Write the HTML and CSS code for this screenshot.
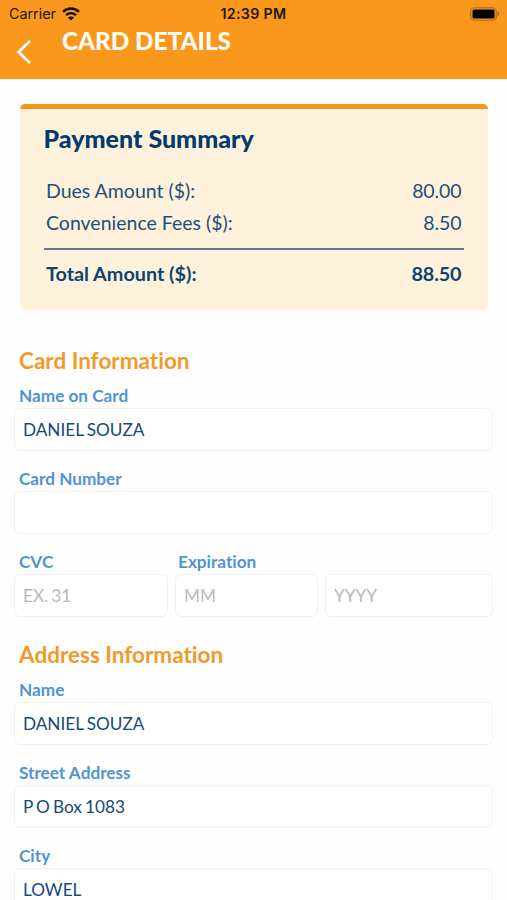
FILE: index.html
```
<!DOCTYPE html>
<html lang="en">
<head>
<meta charset="utf-8">
<title>Card Details</title>
<link rel="stylesheet" href="styles.css">
</head>
<body>
<header class="header">
  <div class="status">
    <div class="carrier">
      <span>Carrier</span>
      <svg class="wifi" width="18" height="14" viewBox="0 0 18 14">
        <path d="M1 4.8C5.6.5 12.4.5 17 4.8" fill="none" stroke="#111" stroke-width="2.5"/>
        <path d="M4 8.2c3-2.7 7-2.7 10 0" fill="none" stroke="#111" stroke-width="2.3"/>
        <path d="M9 13.4 5.9 10.5c1.8-1.5 4.4-1.5 6.2 0z" fill="#111"/>
      </svg>
    </div>
    <span class="time">12:39 PM</span>
    <svg class="battery" width="30" height="14" viewBox="0 0 30 14">
      <rect x=".7" y=".7" width="25.6" height="12.6" rx="3.8" fill="none" stroke="#a76a1b" stroke-width="1.1"/>
      <rect x="2.5" y="2.5" width="22" height="9" rx="1.5" fill="#000"/>
      <path d="M27.6 4.8c2 .6 2 3.8 0 4.4z" fill="#a76a1b"/>
    </svg>
  </div>
  <div class="navbar">
    <svg class="back" width="16" height="26" viewBox="0 0 16 26">
      <path d="M15 2 3.500 13 15 24" fill="none" stroke="#fff" stroke-width="2.6"/>
    </svg>
    <h1 class="title">CARD DETAILS</h1>
  </div>
</header>
<main>
  <section class="summary">
    <h2 class="summary-title">Payment Summary</h2>
    <div class="row"><span>Dues Amount ($):</span><span class="amount">80.00</span></div>
    <div class="row"><span>Convenience Fees ($):</span><span class="amount">8.50</span></div>
    <div class="row total"><span>Total Amount ($):</span><span class="amount">88.50</span></div>
  </section>
  <section class="form">
    <h3 class="section-title">Card Information</h3>
    <div class="field"><label class="label" for="card-name">Name on Card</label><input class="input" id="card-name" value="DANIEL SOUZA"></div>
    <div class="field"><label class="label" for="card-number">Card Number</label><input class="input" id="card-number"></div>
    <div class="field-row">
      <div class="field"><label class="label" for="cvc">CVC</label><input class="input" id="cvc" placeholder="EX. 31"></div>
      <div class="field"><label class="label label-expiration" for="month">Expiration</label><input class="input" id="month" placeholder="MM"></div>
      <div class="field field-year"><input class="input" id="year" placeholder="YYYY"></div>
    </div>
    <h3 class="section-title">Address Information</h3>
    <div class="field"><label class="label" for="name">Name</label><input class="input" id="name" value="DANIEL SOUZA"></div>
    <div class="field"><label class="label" for="street">Street Address</label><input class="input" id="street" value="P O Box 1083"></div>
    <div class="field"><label class="label" for="city">City</label><input class="input" id="city" value="LOWEL"></div>
  </section>
</main>
</body>
</html>
```
FILE: styles.css
```
* { box-sizing: border-box; }
html, body { height: 900px; overflow: hidden; }
body { margin: 0; background: #fefefe; font-family: Lato, sans-serif; font-variant-ligatures: none; color: #1d4f7c; }
h1, h2, h3 { margin: 0; }

.header { height: 79px; background: #f9981c; }
.status {
  display: grid;
  grid-template-columns: 1fr auto 1fr;
  align-items: center;
  height: 27px;
  padding: 0 7px 0 9px;
  font: 14.3px/27px Inter, sans-serif;
  color: #21170a;
}
.carrier { display: flex; align-items: center; gap: 6px; }
.time { margin-right: 2px; font-weight: 600; font-size: 14.2px; letter-spacing: .35px; }
.battery { justify-self: end; }
.navbar { display: flex; padding-left: 15px; }
.back { margin-top: 12px; }
.title { margin-left: 31px; font-size: 24.3px; line-height: 27px; font-weight: 900; color: #fffdf5; }

.summary {
  height: 206px;
  margin: 25px 19px 0 19.5px;
  padding: 13px 24px 0;
  border-top: 5px solid #f5961c;
  border-radius: 5px;
  background: #fff2dc;
}
.summary-title { font-size: 25px; line-height: 32px; font-weight: 900; color: #043b6f; margin-bottom: 21px; }
.row { display: flex; justify-content: space-between; padding: 0 2.5px; font-size: 19.5px; line-height: 32px; }
.amount { letter-spacing: -.1px; }
.total { margin-top: 9px; padding-top: 7px; border-top: 2px solid #5b7a94; font-size: 19.8px; font-weight: 700; color: #0f4473; }

.form { padding: 29px 14px 0; }
.section-title { height: 45px; padding-left: 5px; font-size: 22.5px; line-height: 44px; font-weight: 700; color: #f19a2a; }
.field { display: flex; flex-direction: column; height: 83px; }
.label { height: 24px; padding-left: 5px; font-size: 17.2px; line-height: 24px; font-weight: 700; color: #5094d2; }
.label-expiration { padding-left: 3px; }
.input {
  width: 100%;
  height: 43px;
  padding: 0 8px;
  border: 1.5px solid #f1f1f1;
  border-radius: 6px;
  background: #fff;
  font: 17.2px Lato, sans-serif;
  word-spacing: -1.2px;
  color: #164a78;
  outline: none;
}
.input::placeholder { color: #b8b8b8; opacity: 1; }
.field-row { display: grid; grid-template-columns: 154px 143px 1fr; gap: 7px; }
.field-year { padding-top: 24px; }
```
